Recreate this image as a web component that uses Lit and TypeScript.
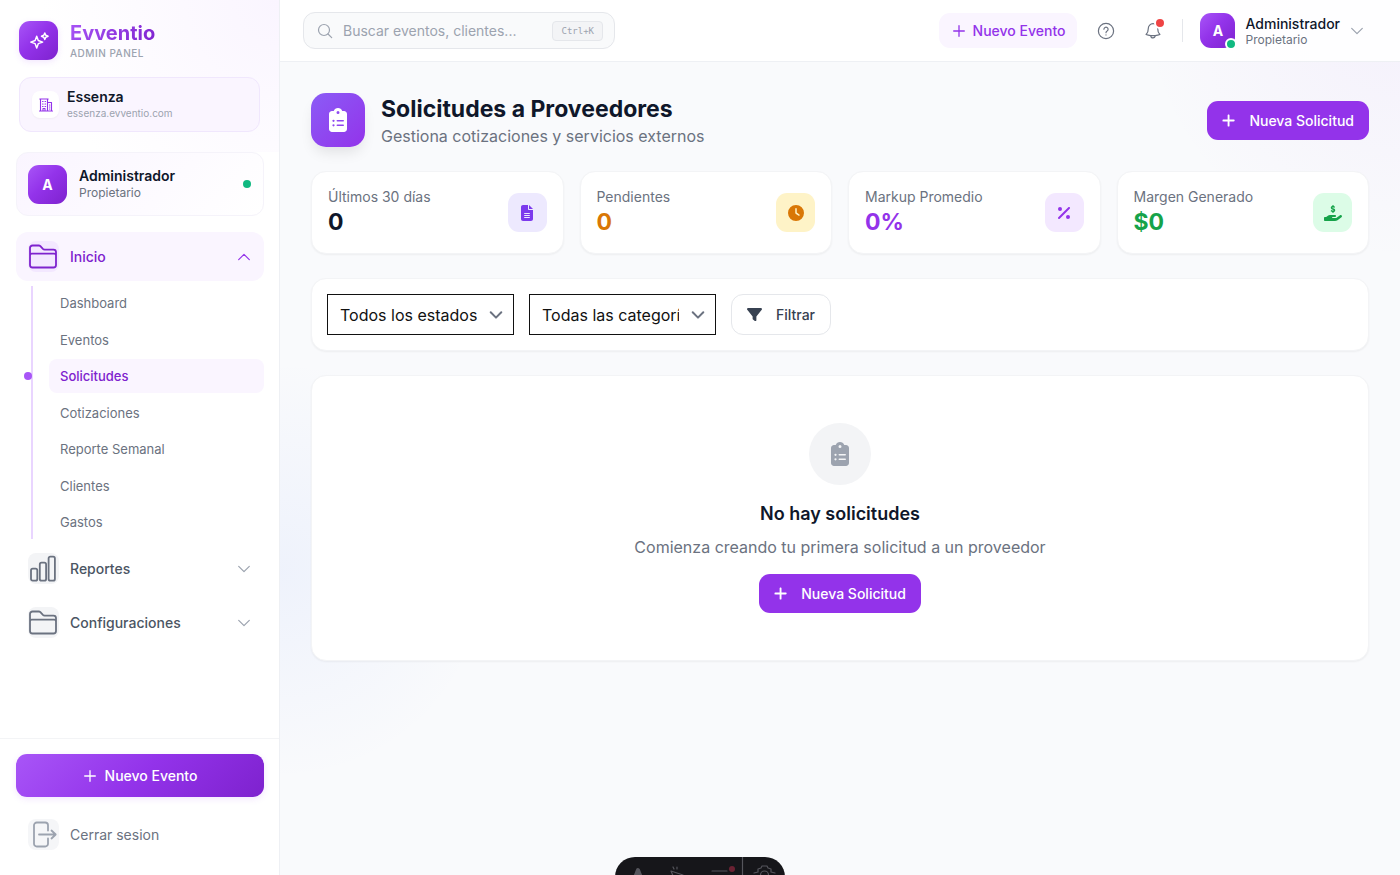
import { LitElement, html, css, svg } from "lit";
import { customElement, state } from "lit/decorators.js";
import { classMap } from "lit/directives/class-map.js";

const solid = (viewBox: string, d: string, cls: string) => html`
  <svg class="solid ${cls}" viewBox=${viewBox} aria-hidden="true"><path d=${d}></path></svg>`;

const CLIPBOARD = "M192 0c-41.8 0-77.4 26.7-90.5 64H64C28.7 64 0 92.7 0 128V448c0 35.3 28.7 64 64 64H320c35.3 0 64-28.7 64-64V128c0-35.3-28.7-64-64-64H282.5C269.4 26.7 233.8 0 192 0zm0 64a32 32 0 1 1 0 64 32 32 0 1 1 0-64zM72 272a24 24 0 1 1 48 0 24 24 0 1 1 -48 0zm104-16H304c8.8 0 16 7.2 16 16s-7.2 16-16 16H176c-8.8 0-16-7.2-16-16s7.2-16 16-16zM72 368a24 24 0 1 1 48 0 24 24 0 1 1 -48 0zm88 0c0-8.8 7.2-16 16-16H304c8.8 0 16 7.2 16 16s-7.2 16-16 16H176c-8.8 0-16-7.2-16-16z";
const FILE = "M64 0C28.7 0 0 28.7 0 64V448c0 35.3 28.7 64 64 64H320c35.3 0 64-28.7 64-64V160H256c-17.7 0-32-14.3-32-32V0H64zM256 0V128H384L256 0zM112 256H272c8.8 0 16 7.2 16 16s-7.2 16-16 16H112c-8.8 0-16-7.2-16-16s7.2-16 16-16zm0 64H272c8.8 0 16 7.2 16 16s-7.2 16-16 16H112c-8.8 0-16-7.2-16-16s7.2-16 16-16zm0 64H272c8.8 0 16 7.2 16 16s-7.2 16-16 16H112c-8.8 0-16-7.2-16-16s7.2-16 16-16z";
const CLOCK = "M256 0a256 256 0 1 1 0 512A256 256 0 1 1 256 0zM232 120V256c0 8 4 15.5 10.7 20l96 64c11 7.4 25.9 4.4 33.3-6.7s4.4-25.9-6.7-33.3L280 243.2V120c0-13.3-10.7-24-24-24s-24 10.7-24 24z";
const PERCENT = "M374.6 118.6c12.5-12.5 12.5-32.8 0-45.3s-32.8-12.5-45.3 0l-320 320c-12.5 12.5-12.5 32.8 0 45.3s32.8 12.5 45.3 0l320-320zM128 128A64 64 0 1 0 0 128a64 64 0 1 0 128 0zM384 384a64 64 0 1 0 -128 0 64 64 0 1 0 128 0z";
const HAND = "M312 24V34.5c6.4 1.2 12.6 2.7 18.2 4.2c12.8 3.4 20.4 16.6 17 29.4s-16.6 20.4-29.4 17c-10.9-2.9-21.1-4.9-30.2-5c-7.3-.1-14.7 1.7-19.4 4.4c-2.1 1.3-3.1 2.4-3.5 3c-.3 .5-.7 1.2-.7 2.8c0 .3 0 .5 0 .6c.2 .2 .9 1.2 3.3 2.6c5.8 3.5 14.4 6.2 27.4 10.1l.9 .3c11.1 3.3 25.9 7.8 37.9 15.3c13.7 8.6 26.1 22.9 26.4 44.9c.3 22.5-11.4 38.9-26.7 48.5c-6.7 4.1-13.9 7-21.3 8.8V232c0 13.3-10.7 24-24 24s-24-10.7-24-24V220.6c-9.5-2.3-18.2-5.3-25.6-7.8c-2.1-.7-4.1-1.4-6-2c-12.6-4.2-19.4-17.8-15.2-30.4s17.8-19.4 30.4-15.2c2.6 .9 5 1.7 7.3 2.5c13.6 4.6 23.4 7.9 33.9 8.3c8 .3 15.1-1.6 19.2-4.1c1.9-1.2 2.8-2.2 3.2-2.9c.4-.6 .9-1.8 .8-4.1l0-.2c0-1 0-2.1-4-4.6c-5.7-3.6-14.3-6.4-27.1-10.3l-1.9-.6c-10.8-3.2-25-7.5-36.4-14.4c-13.5-8.1-26.5-22-26.6-44.1c-.1-22.9 12.9-38.6 27.7-47.4c6.4-3.8 13.3-6.4 20.2-8.2V24c0-13.3 10.7-24 24-24s24 10.7 24 24zM568.2 336.3c13.1 17.8 9.3 42.8-8.5 55.9L433.1 485.5c-23.4 17.2-51.6 26.5-80.7 26.5H192 32c-17.7 0-32-14.3-32-32V416c0-17.7 14.3-32 32-32H68.8l44.9-36c22.7-18.2 50.9-28 80-28H272h16 64c17.7 0 32 14.3 32 32s-14.3 32-32 32H288 272c-8.8 0-16 7.2-16 16s7.2 16 16 16H392.6l119.7-88.2c17.8-13.1 42.8-9.3 55.9 8.5z";
const FILTER = "M3.9 54.9C10.5 40.9 24.5 32 40 32H472c15.5 0 29.5 8.9 36.1 22.9s4.6 30.5-5.2 42.5L320 320.9V448c0 12.1-6.8 23.2-17.7 28.6s-23.8 4.3-33.5-3l-64-48c-8.1-6-12.8-15.5-12.8-25.6V320.9L9 97.3C-.7 85.4-2.8 68.8 3.9 54.9z";
const PLUS = "M256 80c0-17.7-14.3-32-32-32s-32 14.3-32 32V224H48c-17.7 0-32 14.3-32 32s14.3 32 32 32H192V432c0 17.7 14.3 32 32 32s32-14.3 32-32V288H400c17.7 0 32-14.3 32-32s-14.3-32-32-32H256V80z";

const folder = html`<svg class="line nav-svg" viewBox="0 0 31 31" aria-hidden="true">
  <path d="M2 12.500V7a2.500 2.500 0 0 1 2.500-2.500h6.200a2.500 2.500 0 0 1 1.700.7l2.500 2.700a2.500 2.500 0 0 0 1.700.7h8.900A2.500 2.500 0 0 1 28 11.100v12.900a2.500 2.500 0 0 1-2.500 2.500h-21A2.500 2.500 0 0 1 2 24V12.500M2 14.500a1.800 1.800 0 0 1 1.800-1.800h22.400a1.800 1.800 0 0 1 1.800 1.800"></path></svg>`;
const bars = html`<svg class="line nav-svg" viewBox="0 0 31 31" aria-hidden="true">
  <rect x="3" y="15.700" width="6.300" height="12" rx="1.700"></rect>
  <rect x="11.800" y="9.700" width="6.300" height="18" rx="1.700"></rect>
  <rect x="20.600" y="3.700" width="6.300" height="24" rx="1.700"></rect></svg>`;
const exit = html`<svg class="line nav-svg" viewBox="0 0 31 31" aria-hidden="true">
  <path d="M20 11.500V6.300A2.800 2.800 0 0 0 17.200 3.500H8.800A2.800 2.800 0 0 0 6 6.300v18.400A2.800 2.800 0 0 0 8.800 27.500h8.400a2.800 2.800 0 0 0 2.800-2.800V19.500M11 15.500h16.700M23.500 11.500l4.200 4-4.200 4"></path></svg>`;
const chevron = html`<svg class="line chev" viewBox="0 0 14 14" aria-hidden="true"><path d="M1.700 4.300 7 9.600l5.300-5.300"></path></svg>`;
const thinPlus = html`<svg class="line plus" viewBox="0 0 14 14" aria-hidden="true"><path d="M7 1.700v10.600M1.700 7h10.600"></path></svg>`;

interface Stat { label: string; value: string; tone: string; box: string; d: string; }

const STATS: Stat[] = [
  { label: "Últimos 30 días", value: "0", tone: "dark", box: "0 0 384 512", d: FILE },
  { label: "Pendientes", value: "0", tone: "amber", box: "0 0 512 512", d: CLOCK },
  { label: "Markup Promedio", value: "0%", tone: "purple", box: "0 0 384 512", d: PERCENT },
  { label: "Margen Generado", value: "$0", tone: "green", box: "0 0 576 512", d: HAND },
];

const LINKS = ["Dashboard", "Eventos", "Solicitudes", "Cotizaciones", "Reporte Semanal", "Clientes", "Gastos"];

const base = css`
  * { box-sizing: border-box; margin: 0; }
  button, input, select { font: inherit; color: inherit; }
  button { border: 0; background: none; padding: 0; cursor: pointer; }
  a { color: inherit; text-decoration: none; }
  svg { display: block; flex: none; }
  .solid { fill: currentColor; height: 16px; }
  .line { fill: none; stroke: currentColor; stroke-width: 1.2; stroke-linecap: round; stroke-linejoin: round; }
  .chev, .plus { width: 14px; height: 14px; }
  .plus { stroke-width: 1.3; }
  .name { font-weight: 600; color: #0f172a; }
  .role { color: #6b7280; }
  .avatar {
    display: grid; place-items: center; flex: none; border-radius: 11px; color: #fff; font-weight: 700;
    background: linear-gradient(135deg, #a855f7, #9333ea 45%, #7e22ce);
  }
`;

@customElement("side-bar")
export class SideBar extends LitElement {
  @state() private current = "Solicitudes";

  static styles = [base, css`
    :host {
      display: flex; flex-direction: column; background: #fff; border-right: 1px solid #eef0f4;
      font-size: 14px; min-height: 100vh;
    }
    .top { padding: 21px 19px 20px; background: radial-gradient(circle at 100% 0, #faf5ff, #fff 75%); }
    .brand { display: flex; align-items: center; gap: 12px; margin-bottom: 17px; height: 39px; }
    .logo {
      width: 39px; height: 39px; border-radius: 11px; display: grid; place-items: center; color: #fff;
      background: linear-gradient(135deg, #a855f7, #9333ea 45%, #7e22ce); box-shadow: 0 2px 6px #a855f726;
    }
    .logo svg { width: 22px; height: 22px; stroke-width: 1.6; }
    .title {
      font-size: 20px; line-height: 24px; font-weight: 700; width: max-content; color: transparent;
      background: linear-gradient(135deg, #a855f7, #7e22ce); background-clip: text; -webkit-background-clip: text;
    }
    .tag { font-size: 10px; line-height: 16px; color: #9ca3af; font-weight: 500; letter-spacing: 0.05em; }
    .tenant {
      display: flex; align-items: center; gap: 8px; padding: 10px 12px; height: 55px;
      border: 1px solid #f0e7fd; border-radius: 12px; background: #faf5ff;
    }
    .tenant-icon {
      width: 27px; height: 27px; border-radius: 8px; background: #fff; display: grid; place-items: center;
      color: #9333ea; box-shadow: 0 1px 2px #0000000a;
    }
    .tenant-icon svg { width: 16px; height: 16px; stroke-width: 1.1; }
    .tenant .name { line-height: 18px; }
    .domain { font-size: 10px; line-height: 15px; color: #9ca3af; }
    .body { padding: 0 15px 0 16px; flex: 1; }
    .user {
      display: flex; align-items: center; gap: 12px; height: 64px; padding: 0 12px 0 11px; margin-bottom: 16px;
      border: 1px solid #f5f3fa; border-radius: 12px; background: linear-gradient(135deg, #faf5ff, #fff);
    }
    .user .avatar { width: 39px; height: 39px; font-size: 14px; }
    .who { flex: 1; line-height: 18px; }
    .who .role { font-size: 12px; line-height: 16px; }
    .dot { width: 8px; height: 8px; border-radius: 50%; background: #10b981; }
    nav { display: flex; flex-direction: column; gap: 5px; }
    .group, .logout {
      display: flex; align-items: center; width: 100%; height: 49px; padding: 0 13px 0 12px; gap: 11px;
      border-radius: 12px; text-align: left; font-weight: 500; color: #4b5563;
    }
    .group span:nth-child(2), .logout span:nth-child(2) { flex: 1; }
    .nav-icon { width: 31px; height: 31px; border-radius: 8px; background: #f3f4f6; color: #6b7280; }
    .nav-svg { width: 31px; height: 31px; stroke-width: 1.8; }
    .chev { color: #9ca3af; }
    .group.open { background: #faf5ff; color: #7e22ce; }
    .group.open .nav-icon { background: #f3e8ff; color: #7e22ce; }
    .group.open .chev { transform: rotate(180deg); color: #9333ea; }
    .links {
      list-style: none; padding: 0 0 0 16px; margin-left: 15px; border-left: 2px solid #e9d5ff;
      display: flex; flex-direction: column; justify-content: space-between; min-height: 253px;
    }
    .links a {
      display: flex; align-items: center; height: 34px; padding-left: 11px; border-radius: 8px;
      font-size: 13px; color: #6b7280; position: relative;
    }
    .links a.active { background: #faf5ff; color: #7e22ce; font-weight: 500; }
    .links a.active::before {
      content: ""; position: absolute; left: -25px; top: 13px; width: 8px; height: 8px;
      border-radius: 50%; background: #a855f7;
    }
    .foot { border-top: 1px solid #f3f4f6; padding: 15px 15px 16px 16px; }
    .create {
      display: flex; align-items: center; justify-content: center; gap: 8px; width: 100%; height: 43px;
      border-radius: 11px; color: #fff; font-weight: 500; margin-bottom: 13px;
      background: linear-gradient(135deg, #a855f7, #9333ea 50%, #7e22ce); box-shadow: 0 2px 6px #a855f726;
    }
    .logout { color: #6b7280; font-weight: 400; }
    .logout .nav-icon { color: #9ca3af; background: #f5f6f8; }
  `];

  private pick(event: Event, name: string) {
    event.preventDefault();
    this.current = name;
  }

  render() {
    return html`
      <div class="top">
        <div class="brand">
          <div class="logo"><svg class="line" viewBox="0 0 24 24" aria-hidden="true">
            <path d="M9.500 6.700 11.200 11.500 16 13.200 11.200 14.900 9.500 19.700 7.800 14.900 3 13.200 7.800 11.500zM18.300 3.200l1.100 2.500 2.500 1.100-2.500 1.100-1.100 2.500-1.100-2.500-2.500-1.100 2.500-1.100z"></path></svg></div>
          <div><div class="title">Evventio</div><div class="tag">ADMIN PANEL</div></div>
        </div>
        <div class="tenant">
          <div class="tenant-icon"><svg class="line" viewBox="0 0 16 16" aria-hidden="true">
            <path d="M1.500 14h13M2.500 14V2h7v12M9.500 5.500h4v8.500M1.800 2h8.400M5 14v-2.500h2v2.500M4.500 4.500h.6M7 4.500h.6M4.500 7h.6M7 7h.6M4.500 9.500h.6M7 9.500h.6M11.500 8h.4M11.500 10h.4M11.500 12h.4"></path></svg></div>
          <div><div class="name">Essenza</div><div class="domain">essenza.evventio.com</div></div>
        </div>
      </div>
      <div class="body">
        <div class="user">
          <div class="avatar">A</div>
          <div class="who"><div class="name">Administrador</div><div class="role">Propietario</div></div>
          <span class="dot"></span>
        </div>
        <nav>
          <button class="group open"><span class="nav-icon">${folder}</span><span>Inicio</span>${chevron}</button>
          <ul class="links">
            ${LINKS.map((name) => html`<li><a href="#" class=${classMap({ active: name === this.current })}
              @click=${(e: Event) => this.pick(e, name)}>${name}</a></li>`)}
          </ul>
          <button class="group"><span class="nav-icon">${bars}</span><span>Reportes</span>${chevron}</button>
          <button class="group"><span class="nav-icon">${folder}</span><span>Configuraciones</span>${chevron}</button>
        </nav>
      </div>
      <div class="foot">
        <button class="create">${thinPlus}Nuevo Evento</button>
        <button class="logout"><span class="nav-icon">${exit}</span><span>Cerrar sesion</span></button>
      </div>`;
  }
}

@customElement("top-bar")
export class TopBar extends LitElement {
  static styles = [base, css`
    :host {
      display: flex; align-items: center; justify-content: space-between; height: 62px; padding: 0 31px 0 23px;
      background: #ffffffe6; border-bottom: 1px solid #eef0f4; font-size: 14px;
    }
    .search {
      display: flex; align-items: center; gap: 10px; width: 312px; height: 37px; padding: 0 11px 0 13px;
      border: 1px solid #e5e7eb; border-radius: 12px; background: #f9fafb; color: #9ca3af;
    }
    .search svg { width: 16px; height: 16px; }
    .search input { flex: 1; min-width: 0; border: 0; outline: 0; padding: 0; background: none; }
    .search input::placeholder { color: #9ca3af; opacity: 1; }
    kbd {
      font: 9px/18px "DejaVu Sans Mono", monospace; padding: 0 8px; border: 1px solid #e5e7eb;
      border-radius: 4px; background: #f3f4f6;
    }
    .right { display: flex; align-items: center; }
    .new {
      display: flex; align-items: center; gap: 7px; height: 35px; padding: 0 12px 0 13px; border-radius: 11px;
      background: #faf5ff; color: #9333ea; font-weight: 500; margin-right: 11px;
    }
    .icon { width: 35px; height: 35px; display: grid; place-items: center; color: #6b7280; position: relative; margin-right: 12px; }
    .icon svg { width: 18px; height: 18px; }
    .badge {
      position: absolute; top: 4px; right: 4px; width: 12px; height: 12px; border-radius: 50%;
      background: #ef4444; border: 2px solid #fff;
    }
    .rule { width: 1px; height: 23px; background: #e5e7eb; margin-right: 17px; }
    .user { display: flex; align-items: center; gap: 10px; padding-right: 5px; text-align: left; }
    .user .avatar { width: 35px; height: 35px; position: relative; font-size: 14px; }
    .online {
      position: absolute; right: -2px; bottom: -2px; width: 12px; height: 12px; border-radius: 50%;
      background: #10b981; border: 2px solid #fff;
    }
    .user .name { font-weight: 500; line-height: 17px; }
    .user .role { font-size: 12px; line-height: 15px; }
    .user .chev { color: #9ca3af; }
  `];

  render() {
    return html`
      <div class="search">
        <svg class="line" viewBox="0 0 16 16" aria-hidden="true"><circle cx="7" cy="7" r="5.500"></circle><path d="m11 11 3.700 3.700"></path></svg>
        <input type="search" aria-label="Buscar" placeholder="Buscar eventos, clientes..." />
        <kbd>Ctrl+K</kbd>
      </div>
      <div class="right">
        <button class="new">${thinPlus}Nuevo Evento</button>
        <button class="icon" aria-label="Ayuda"><svg class="line" viewBox="0 0 18 18" aria-hidden="true">
          <circle cx="9" cy="9" r="7.600"></circle><path d="M6.900 7.200a2.100 2.100 0 1 1 3.200 1.900c-.7.4-1.100.8-1.100 1.600M9 12.900v.1"></path></svg></button>
        <button class="icon" aria-label="Notificaciones"><svg class="line" viewBox="0 0 18 18" aria-hidden="true">
          <path d="M9 1.700a4.700 4.700 0 0 0-4.700 4.700c0 3.300-.9 4.900-2.200 6.100 1.500.6 3.100.9 4.700 1.100h4.400c1.600-.2 3.200-.5 4.700-1.100-1.300-1.200-2.200-2.800-2.200-6.100A4.700 4.700 0 0 0 9 1.700zM6.800 13.700a2.200 2.200 0 0 0 4.400 0"></path></svg>
          <span class="badge"></span></button>
        <span class="rule"></span>
        <button class="user">
          <span class="avatar">A<span class="online"></span></span>
          <span><div class="name">Administrador</div><div class="role">Propietario</div></span>
          ${chevron}
        </button>
      </div>`;
  }
}

@customElement("app-root")
export class AppRoot extends LitElement {
  static styles = [base, css`
    :host {
      display: grid; grid-template-columns: 280px minmax(0, 1fr); min-height: 100vh;
      font-family: Inter, "Liberation Sans", sans-serif; color: #0f172a;
    }
    .content {
      background:
        radial-gradient(circle at 100% 0, #a855f70f, transparent 260px),
        radial-gradient(circle at 0 570px, #4f7df910, transparent 210px),
        #f9fafc;
    }
    main { padding: 31px; display: flex; flex-direction: column; gap: 24px; }
    .head { display: flex; align-items: center; gap: 16px; height: 54px; }
    .head-icon {
      width: 54px; height: 54px; border-radius: 15px; display: grid; place-items: center; color: #fff;
      background: linear-gradient(135deg, #8b5cf6, #9333ea); box-shadow: 0 8px 14px -3px #0000001a;
    }
    .clip { height: 24px; }
    .titles { flex: 1; padding-top: 2px; }
    h1 { font-size: 23px; line-height: 31px; font-weight: 700; }
    .sub, .empty p { font-size: 16px; line-height: 23px; color: #6b7280; }
    .primary {
      display: flex; align-items: center; gap: 14px; height: 39px; padding: 0 15px; border-radius: 11px;
      background: #9333ea; color: #fff; font-size: 14px; font-weight: 500;
    }
    .primary .solid { height: 15px; }
    .card { background: #fff; border: 1px solid #f3f4f6; border-radius: 15px; box-shadow: 0 1px 2px #0000000d; }
    .stats { display: grid; grid-template-columns: repeat(4, 1fr); gap: 16px; }
    .stat { display: flex; align-items: center; justify-content: space-between; padding: 15px 16px; }
    .stat-label { font-size: 14px; line-height: 20px; color: #6b7280; }
    .stat-value { font-size: 23px; line-height: 31px; font-weight: 700; }
    .stat-icon { width: 39px; height: 39px; border-radius: 11px; display: grid; place-items: center; }
    .dark .stat-icon { background: #ede9fe; color: #7c3aed; }
    .amber .stat-icon { background: #fef3c7; color: #d97706; }
    .amber .stat-value { color: #d97706; }
    .purple .stat-icon { background: #f3e8ff; color: #9333ea; }
    .purple .stat-value { color: #9333ea; }
    .green .stat-icon { background: #dcfce7; color: #16a34a; }
    .green .stat-value { color: #16a34a; }
    .filters { display: flex; gap: 15px; padding: 15px; }
    .pick { position: relative; display: flex; align-items: center; }
    .pick select {
      appearance: none; width: 187px; height: 41px; padding: 0 36px 0 12px; border: 1px solid #111; border-radius: 0;
      background: #fff; font-size: 16px; color: #111;
    }
    .pick svg { position: absolute; right: 11px; color: #6b7280; stroke-width: 2; pointer-events: none; }
    .filter {
      display: flex; align-items: center; gap: 14px; height: 41px; padding: 0 15px; border: 1px solid #e5e7eb;
      border-radius: 12px; color: #374151; font-size: 14px; font-weight: 500;
    }
    .filter .solid { height: 15px; }
    .empty { display: flex; flex-direction: column; align-items: center; padding: 47px; }
    .empty-icon {
      width: 62px; height: 62px; border-radius: 50%; background: #f3f4f6; color: #9ca3af;
      display: grid; place-items: center; margin-bottom: 15px;
    }
    h2 { font-size: 18px; line-height: 27px; font-weight: 600; margin-bottom: 9px; }
    .empty p { margin-bottom: 15px; }
    .dock {
      position: fixed; left: 50%; bottom: -22px; margin-left: -85px; width: 170px; height: 40px; border-radius: 20px;
      background: #16161a; color: #55555c; overflow: hidden;
    }
    .dock svg { width: 170px; height: 40px; }
    .alert { fill: #6b2233; stroke: none; }
    .letter { stroke-width: 4; }
  `];

  private primary() {
    return html`<button class="primary">${solid("0 0 448 512", PLUS, "add")}Nueva Solicitud</button>`;
  }

  private dropdown(label: string, first: string) {
    return html`<div class="pick"><select aria-label=${label}><option>${first}</option></select>${chevron}</div>`;
  }

  render() {
    return html`
      <side-bar></side-bar>
      <div class="content">
        <top-bar></top-bar>
        <main>
          <div class="head">
            <div class="head-icon">${solid("0 0 384 512", CLIPBOARD, "clip")}</div>
            <div class="titles"><h1>Solicitudes a Proveedores</h1>
              <div class="sub">Gestiona cotizaciones y servicios externos</div></div>
            ${this.primary()}
          </div>
          <section class="stats">
            ${STATS.map((s) => html`<div class="card stat ${s.tone}">
              <div><div class="stat-label">${s.label}</div><div class="stat-value">${s.value}</div></div>
              <div class="stat-icon">${solid(s.box, s.d, "")}</div></div>`)}
          </section>
          <section class="card filters">
            ${this.dropdown("Estado", "Todos los estados")}
            ${this.dropdown("Categoría", "Todas las categorías")}
            <button class="filter">${solid("0 0 512 512", FILTER, "")}Filtrar</button>
          </section>
          <section class="card empty">
            <div class="empty-icon">${solid("0 0 384 512", CLIPBOARD, "clip")}</div>
            <h2>No hay solicitudes</h2>
            <p>Comienza creando tu primera solicitud a un proveedor</p>
            ${this.primary()}
          </section>
        </main>
      </div>
      <div class="dock"><svg class="line" viewBox="0 0 170 40" aria-hidden="true">
        ${svg`<path class="letter" d="M18 26l5-13 5 13"></path>
        <path d="M56 14l12 4-5 3-2 5zM58 10l1 2M62 10v2M97 14h15M127.500 0v40"></path>
        <circle class="alert" cx="117" cy="12" r="3"></circle>
        <path d="M143 12l3-1 1-2h5l1 2 3 1M139 16l4-1v-3M160 16l-4-1v-3"></path>
        <circle cx="149.500" cy="18" r="4"></circle>`}
      </svg></div>`;
  }
}
